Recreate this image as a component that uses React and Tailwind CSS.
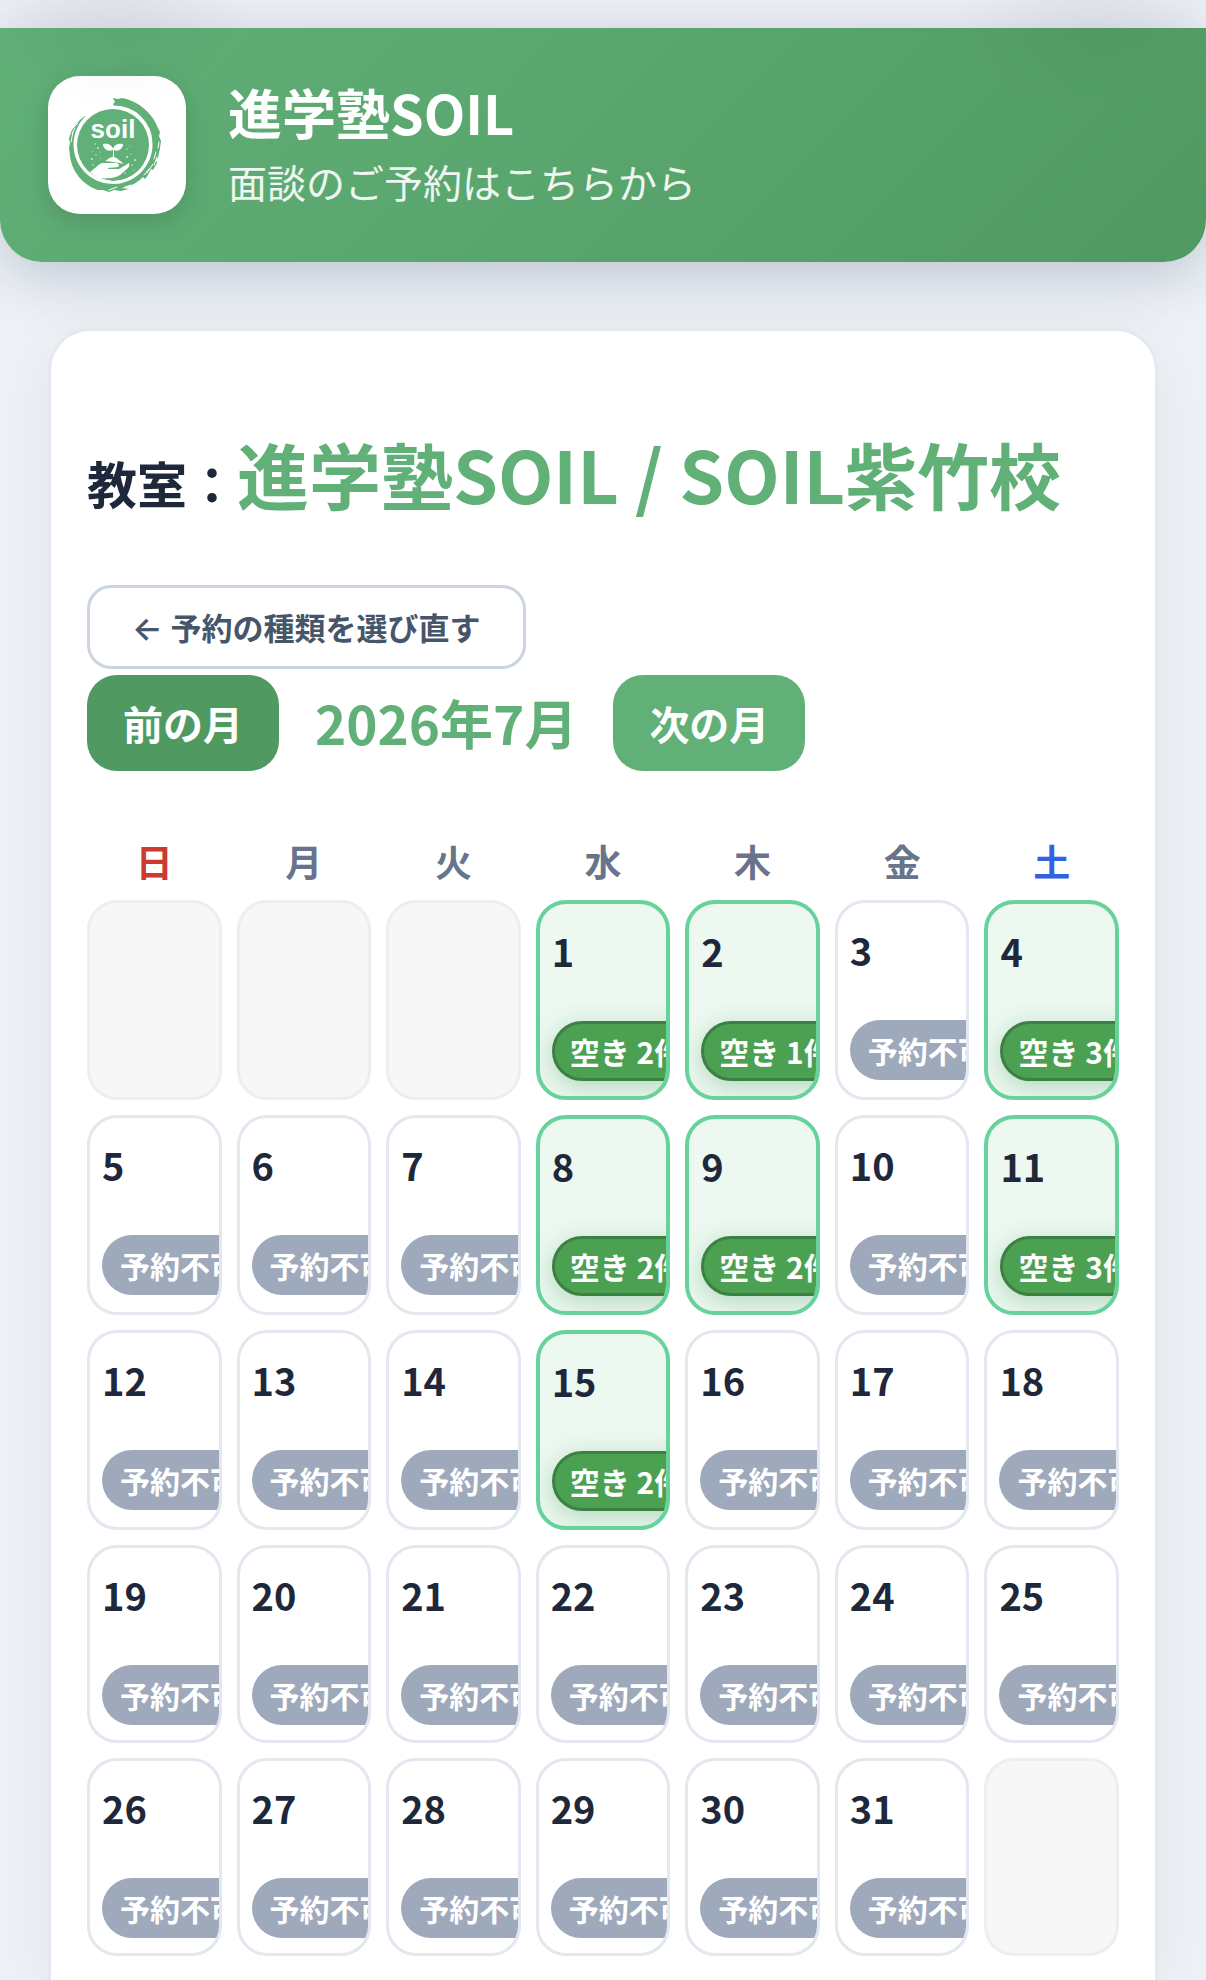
import { useState } from "react";

const WEEKDAYS = ["日", "月", "火", "水", "木", "金", "土"];

// Open slots per day, every other day is closed
const OPEN_SLOTS = { 1: 2, 2: 1, 4: 3, 8: 2, 9: 2, 11: 3, 15: 2 };

function buildCells(year, month) {
  const lead = new Date(year, month - 1, 1).getDay();
  const total = new Date(year, month, 0).getDate();
  const cells = Array(lead).fill(null);
  for (let d = 1; d <= total; d++) cells.push(d);
  while (cells.length % 7 !== 0) cells.push(null);
  return cells;
}

function weekdayColor(i) {
  if (i === 0) return "text-[#cc3a30]";
  if (i === 6) return "text-[#3461e4]";
  return "text-[#67748b]";
}

function SoilLogo() {
  return (
    <svg viewBox="2 0 92 94" className="h-[94px] w-[92px] overflow-visible" role="img" aria-label="soil">
      {/* Brush ring */}
      <path
        d="M44 0 L49 1 L53 0 C70 3 84 16 89 30 L91 34 L90 38 L92 43 L91 50 L90 55 L89 60 L87 62 L88 65 L84 72 L82 71 L79 77 L76 81 L74 79 C67 86 60 89 52 90 L60 91 L52 93 L45 92 L40 94 L34 92 L29 92 C14 87 3 74 1 58 L0 50 L1 45 L0 41 L2 34 C5 28 10 22 16 18 L19 19 C10 27 6 36 6 46 A38 38 0 0 0 82 46 C82 28 70 13 52 9 L45 9 L44 6 L46 4 Z"
        fill="#61b078"
      />
      <circle cx="44" cy="47" r="36" fill="#61b078" />
      <path
        d="M43 9 C65 8 82 25 82 46 A38 38 0 1 1 19 18"
        fill="none"
        stroke="#fff"
        strokeWidth="3"
      />
      {/* Dry brush streaks */}
      <g fill="none" stroke="#fff" strokeWidth="1" strokeLinecap="round">
        <path d="M2 44 L4 34 M4 30 L9 25 M3 36 L6 30 M88 59 L85 67 M84 66 L78 75 M87 54 L85 61 M80 71 L75 77 M40 92 L48 89 M56 89 L62 87 M90 44 L89 50" />
      </g>
      <text
        x="44"
        y="40"
        textAnchor="middle"
        fill="#fff"
        className="font-['Liberation_Sans',sans-serif] text-[26px] font-bold"
      >
        soil
      </text>
      {/* Sprout */}
      <path d="M44 52 C39 54 34 51 34 46 C39 45 43 47 44 51 C45 47 49 45 54 46 C54 51 49 54 45 52 L45 61 L44 61 Z" fill="#fff" />
      <path d="M36 63 C39 62 40 59 44 59 C48 59 49 62 53 64 L54 66 C49 64 42 64 36 63 Z" fill="#fff" />
      {/* Hand */}
      <path
        d="M21 74 C26 71 28 67 33 65 L46 65 C50 65 51 67 49 69 L39 70 L39 71 L50 71 L60 65 C61 66 60 69 59 70 L51 77 C47 80 38 81 31 80 L45 84 C35 84 27 80 21 74 Z"
        fill="#fff"
      />
      {/* Soil dust */}
      <g fill="#fff" opacity="0.8">
        <circle cx="26" cy="46" r="0.7" />
        <circle cx="29" cy="50" r="0.9" />
        <circle cx="24" cy="53" r="0.6" />
        <circle cx="31" cy="54" r="0.6" />
        <circle cx="27" cy="57" r="0.7" />
        <circle cx="23" cy="61" r="0.9" />
        <circle cx="32" cy="60" r="0.6" />
        <circle cx="24" cy="67" r="0.7" />
        <circle cx="58" cy="51" r="0.7" />
        <circle cx="62" cy="56" r="0.6" />
        <circle cx="58" cy="59" r="0.9" />
        <circle cx="66" cy="62" r="0.9" />
        <circle cx="63" cy="67" r="0.7" />
        <circle cx="65" cy="72" r="0.6" />
        <circle cx="56" cy="75" r="0.7" />
        <circle cx="61" cy="48" r="0.5" />
      </g>
    </svg>
  );
}

function DayCell({ day }) {
  if (day === null) {
    return <div className="rounded-[30px] border-3 border-[#eeeeee] bg-[#f7f7f7]" />;
  }

  const slots = OPEN_SLOTS[day];

  if (slots) {
    return (
      <button
        type="button"
        className="flex min-w-0 cursor-pointer flex-col items-start overflow-hidden rounded-[30px] border-4 border-[#68d29d] bg-[#ecf8f0] px-3 py-[15px] text-left"
      >
        <span className="mb-[38px] text-[38px] leading-[64px] font-bold">{day}</span>
        <span className="rounded-full border-3 border-[#3c8144] bg-[#4ca052] px-[15px] text-[30px] leading-[54px] font-bold whitespace-nowrap text-white shadow-[0_6px_24px_rgba(56,142,80,0.3)]">
          空き {slots}件
        </span>
      </button>
    );
  }

  return (
    <div className="flex min-w-0 flex-col items-start overflow-hidden rounded-[30px] border-3 border-[#e2e7f0] bg-white px-3 py-[15px]">
      <span className="mb-[38px] text-[38px] leading-[64px] font-bold">{day}</span>
      <span className="rounded-full bg-[#9fa9bc] px-[18px] text-[30px] leading-[60px] font-bold whitespace-nowrap text-white">
        予約不可
      </span>
    </div>
  );
}

export default function App() {
  const [current, setCurrent] = useState({ year: 2026, month: 7 });

  const moveMonth = (step) => {
    const next = new Date(current.year, current.month - 1 + step, 1);
    setCurrent({ year: next.getFullYear(), month: next.getMonth() + 1 });
  };

  return (
    <div
      lang="ja"
      className="relative flex min-h-screen flex-col overflow-hidden bg-[#eef2f7] pt-7 font-['Noto_Sans_CJK_JP',sans-serif] text-[#1e283a]"
    >
      {/* Header */}
      <header className="flex items-center gap-[42px] rounded-b-[42px] bg-linear-135 from-[#61b078] to-[#509a62] px-12 py-12 shadow-[0_12px_60px_rgba(71,85,115,0.3)]">
        <div className="flex size-[138px] shrink-0 items-center justify-center rounded-[32px] bg-white shadow-[0_6px_24px_rgba(0,0,0,0.15)]">
          <SoilLogo />
        </div>
        <div>
          <h1 className="text-[54px] leading-[72px] font-bold text-white">進学塾SOIL</h1>
          <p className="text-[39px] leading-[66px] text-white/90">面談のご予約はこちらから</p>
        </div>
      </header>

      {/* Booking card */}
      <main className="mx-12 mt-[66px] flex-1 rounded-t-[42px] border-3 border-b-0 border-[#e3e8f1] bg-white px-9 pt-[88px] pb-6 shadow-[0_12px_72px_rgba(0,0,0,0.06)]">
        <h2 className="text-[50px] leading-[108px] font-bold">
          教室：
          <span className="text-[72px] text-[#61b078]">進学塾SOIL / SOIL紫竹校</span>
        </h2>

        <button
          type="button"
          className="mt-[49px] block h-[84px] rounded-3xl border-3 border-[#cbd5e1] bg-white px-[42px] text-[31px] font-semibold text-[#475569]"
        >
          <span className="font-['Inter',sans-serif] text-[32px] leading-none">← </span>
          予約の種類を選び直す
        </button>

        <div className="mt-[6px] flex items-center gap-9">
          <button
            type="button"
            onClick={() => moveMonth(-1)}
            className="h-24 rounded-[30px] bg-[#509a62] px-9 text-[40px] font-semibold text-white"
          >
            前の月
          </button>
          <span className="text-[53px] font-bold text-[#61b078]">
            {current.year}年{current.month}月
          </span>
          <button
            type="button"
            onClick={() => moveMonth(1)}
            className="h-24 rounded-[30px] bg-[#61b078] px-9 text-[40px] font-semibold text-white"
          >
            次の月
          </button>
        </div>

        <div className="mt-[66px] grid grid-cols-7 gap-[15px]">
          {WEEKDAYS.map((w, i) => (
            <div
              key={w}
              className={`text-center text-[37px] leading-[48px] font-bold ${weekdayColor(i)}`}
            >
              {w}
            </div>
          ))}
          {buildCells(current.year, current.month).map((day, i) => (
            <DayCell key={i} day={day} />
          ))}
        </div>
      </main>

      {/* Soft shade along the top edge */}
      <div className="pointer-events-none absolute inset-x-0 top-0 flex h-36 justify-between">
        <div className="w-[260px] bg-[radial-gradient(140px_120px_at_115px_-10px,rgba(0,0,0,0.05),transparent)]" />
        <div className="w-[260px] bg-[radial-gradient(140px_120px_at_145px_-10px,rgba(0,0,0,0.05),transparent)]" />
      </div>
    </div>
  );
}
